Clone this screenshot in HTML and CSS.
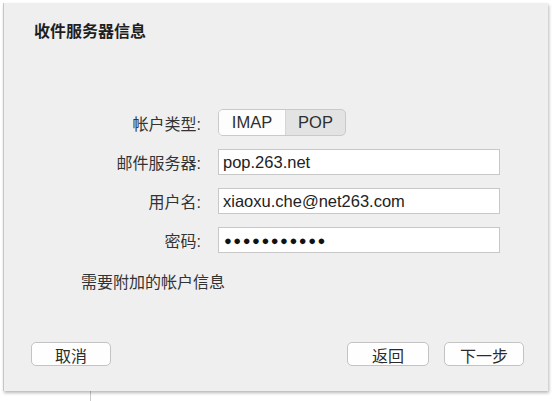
FILE: index.html
```html
<!DOCTYPE html>
<html lang="zh-CN">

<head>
    <meta charset="utf-8">
    <title>收件服务器信息</title>
    <link rel="stylesheet" href="styles.css">
</head>

<body>

    <div class="sheet">
        <h1 class="title">收件服务器信息</h1>

        <div class="form">
            <label class="label">帐户类型:</label>
            <div class="segmented">
                <span class="segment selected">IMAP</span>
                <span class="segment">POP</span>
            </div>

            <label class="label">邮件服务器:</label>
            <input class="field" type="text" value="pop.263.net">

            <label class="label">用户名:</label>
            <input class="field" type="text" value="xiaoxu.che@net263.com">

            <label class="label">密码:</label>
            <input class="field password" type="text" value="●●●●●●●●●●●">
        </div>

        <p class="note">需要附加的帐户信息</p>

        <div class="actions">
            <button class="btn">取消</button>
            <div class="spacer"></div>
            <button class="btn back">返回</button>
            <button class="btn">下一步</button>
        </div>
    </div>

</body>

</html>
```

FILE: styles.css
```css
body {
    margin: 0;
    height: 401px;
    font-family: "Liberation Sans", Arial, "Noto Sans CJK SC", sans-serif;
    color: #2b2b2b;
    background: linear-gradient(#c9c9c9, #c9c9c9) 90px 391px / 1px 10px no-repeat, #ffffff;
    overflow: hidden;
}

.sheet {
    box-sizing: border-box;
    width: 545px;
    height: 388px;
    margin: 3px 0 0 3px;
    border-left: 1px solid #c6c6c6;
    background-color: #efefef;
    box-shadow: 1px 2px 3px rgba(0, 0, 0, 0.28);
    display: flex;
    flex-direction: column;
}

.title {
    margin: 19px 0 0 30px;
    font-size: 16px;
    line-height: 20px;
    font-weight: bold;
    color: #1f1f1f;
}

.form {
    margin-top: 68px;
    display: grid;
    grid-template-columns: 197px 282px;
    grid-auto-rows: 26px;
    column-gap: 17px;
    row-gap: 13px;
    align-items: center;
}

.label {
    text-align: right;
    font-size: 16px;
    color: #333;
}

.segmented {
    box-sizing: border-box;
    width: 128px;
    height: 27px;
    margin-top: -1px;
    display: flex;
    border: 1px solid #c9c9c9;
    border-radius: 5px;
    background-color: #e3e3e3;
    overflow: hidden;
}

.segment {
    flex: 1;
    display: flex;
    justify-content: center;
    align-items: center;
    font-size: 16.5px;
    color: #2e2e2e;
}

.segment.selected {
    flex: 0 0 66px;
    background-color: #fdfdfd;
    border-right: 1px solid #d6d6d6;
}

.field {
    box-sizing: border-box;
    width: 282px;
    height: 26px;
    margin: 0;
    padding: 0 4px;
    border: 1px solid #c8c8c8;
    background-color: #fff;
    font-family: "Liberation Sans", Arial, sans-serif;
    font-size: 16.5px;
    color: #222;
    outline: none;
}

.password {
    padding-left: 5px;
    font-size: 13px;
    letter-spacing: 1.5px;
    color: #111;
}

.note {
    margin: 20px 0 0 77px;
    font-size: 16px;
    line-height: 20px;
    color: #333;
}

.actions {
    margin: 49px 24px 0 27px;
    display: flex;
    gap: 15px;
}

.spacer {
    flex: 1;
}

.btn {
    box-sizing: border-box;
    width: 80px;
    height: 24px;
    padding: 0;
    border: 1px solid #c3c3c3;
    border-radius: 5px;
    background-color: #fefefe;
    font-family: "Liberation Sans", Arial, "Noto Sans CJK SC", sans-serif;
    font-size: 16px;
    color: #2b2b2b;
}

.btn.back {
    width: 82px;
}
```
